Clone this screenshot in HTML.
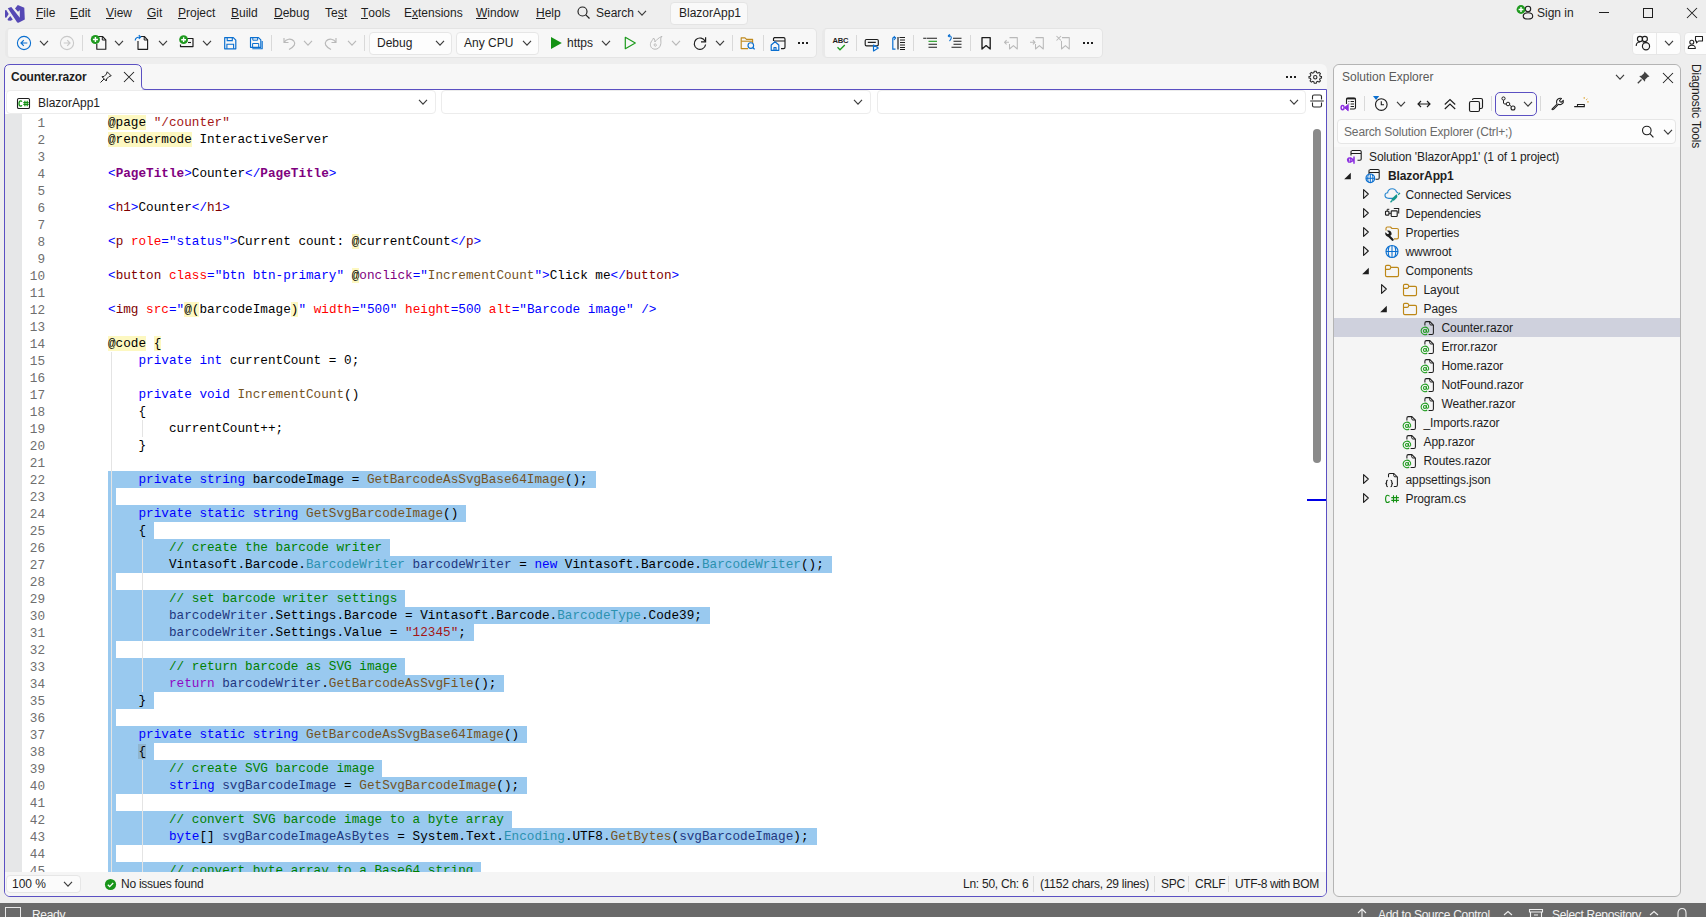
<!DOCTYPE html>
<html><head><meta charset="utf-8">
<style>
*{box-sizing:border-box;margin:0;padding:0}
html,body{width:1706px;height:917px;overflow:hidden;background:#eeeeee;font-family:"Liberation Sans",sans-serif;font-size:12px;color:#1e1e1e}
.abs{position:absolute}
.tx{position:absolute;white-space:nowrap;line-height:14px;font-size:12px}
.sb{letter-spacing:-0.25px}
svg{position:absolute;overflow:visible}
.menu{position:absolute;top:6px;font-size:12px;white-space:nowrap;line-height:14px}
.menu u{text-decoration:none;position:relative}
.menu u:after{content:"";position:absolute;left:0;right:0;bottom:1px;height:1px;background:#1e1e1e}
.tb{position:absolute;top:28px;height:30px;background:#f7f7f7;border:1px solid #e4e4e4;border-left:3px solid #e9e9e9;border-radius:5px}
.dd{position:absolute;top:32px;height:23px;background:#fdfdfd;border:1px solid #e6e6e6;border-radius:4px}
#editor{position:absolute;left:4px;top:89px;width:1323px;height:808px;border:1px solid #5b50c2;border-radius:0 0 6px 6px;background:#ffffff}
#tabstrip{position:absolute;left:5px;top:64px;width:1322px;height:25px;background:#f7f7f7;border-radius:6px 6px 0 0}
#tab{position:absolute;left:4px;top:64px;width:138px;height:26px;border:1px solid #5b50c2;border-bottom:none;border-radius:6px 6px 0 0;background:#f7f7f7}
.navbar{position:absolute;top:90px;height:24px;background:#ffffff;border:1px solid #ececec;border-radius:4px}
#gutter{position:absolute;left:5px;top:114px;width:17px;height:758px;background:#e6e7e8}
.ln{position:absolute;left:20px;width:25px;text-align:right;font-family:"Liberation Mono",monospace;font-size:12.7px;line-height:17px;height:17px;color:#6e6e6e;padding-top:1px}
.cl{position:absolute;left:108px;font-family:"Liberation Mono",monospace;font-size:12.7px;line-height:17px;height:17px;white-space:pre;color:#000}
.sel{position:absolute;left:108px;height:17px;background:#99c9ef}
.k{color:#0000ff}.c{color:#8f08c4}.s{color:#a31515}.m{color:#008000}.ty{color:#2b91af}.f{color:#74531f}.v{color:#1f377f}.p{color:#000}
.d{color:#0000ff}.e{color:#800000}.r{color:#ff0000}.g{color:#800080}.G{color:#800080;font-weight:bold}.y{background:#fdf8c1}.B{background:#8fb5cf}
.guide{position:absolute;width:1px;background:#e4e4e4}
#codeclip{position:absolute;left:5px;top:114px;width:1321px;height:758px;overflow:hidden}
#codeclip > div{position:absolute;left:-5px;top:-114px}
#edstatus{position:absolute;left:5px;top:872px;width:1321px;height:24px;background:#f5f5f5;border-radius:0 0 5px 5px}
#se{position:absolute;left:1333px;top:64px;width:348px;height:833px;background:#f5f5f5;border:1px solid #b4b4b4;border-radius:6px}
#sehead{position:absolute;left:1334px;top:65px;width:346px;height:82px;background:#f9f9f9;border-radius:6px 6px 0 0}
.se{position:absolute;font-size:12px;white-space:nowrap;line-height:14px;color:#1e1e1e}
#status{position:absolute;left:0;top:903px;width:1706px;height:14px;background:#6a6a6a}
.st{position:absolute;top:908px;font-size:12px;line-height:14px;color:#f3f3f3;white-space:nowrap;letter-spacing:-0.3px}
</style></head><body>

<!-- MENU BAR -->
<svg style="left:3px;top:3px" width="25" height="23" viewBox="0 0 25 23">
  <path d="M4.8 5.3 L8.3 4.1 L16.8 14.8 L16.8 7.3 L15 8.8 L12 5.4 L14.8 2.1 L21.3 4.8 L21.8 16.5 L15.5 19.8 L14.2 19.5 Z" fill="#5548b5"/>
  <path d="M2 7.2 L3.3 7 L5.7 11 L3.3 14.8 L2 14.5 Z M4.5 16.3 L7.3 13 L9.8 16.5 L7.8 17.8 L5 17.5 Z" fill="#5548b5"/>
</svg>
<div class="menu" style="left:36px"><u>F</u>ile</div>
<div class="menu" style="left:70px"><u>E</u>dit</div>
<div class="menu" style="left:106px"><u>V</u>iew</div>
<div class="menu" style="left:147px"><u>G</u>it</div>
<div class="menu" style="left:178px"><u>P</u>roject</div>
<div class="menu" style="left:231px"><u>B</u>uild</div>
<div class="menu" style="left:274px"><u>D</u>ebug</div>
<div class="menu" style="left:325px">Te<u>s</u>t</div>
<div class="menu" style="left:361px"><u>T</u>ools</div>
<div class="menu" style="left:404px">E<u>x</u>tensions</div>
<div class="menu" style="left:476px"><u>W</u>indow</div>
<div class="menu" style="left:536px"><u>H</u>elp</div>
<div class="menu" style="left:596px">Search</div>
<div class="abs" style="left:670px;top:1.5px;width:78px;height:23px;background:#f9f9f9;border:1px solid #e4e4e4;border-radius:4px"></div>
<div class="menu" style="left:679px">BlazorApp1</div>
<div class="menu" style="left:1537px">Sign in</div>

<!-- TOOLBAR -->
<div class="tb" style="left:5px;width:812px"></div>
<div class="tb" style="left:822px;width:281px"></div>
<div class="dd" style="left:1632px;width:49px"></div>
<div class="abs" style="left:1656px;top:33px;width:1px;height:21px;background:#e8e8e8"></div>
<div class="dd" style="left:1684px;width:30px"></div>
<div class="dd" style="left:369px;width:83px"></div>
<div class="dd" style="left:456px;width:83px"></div>
<div class="menu" style="left:377px;top:36px">Debug</div>
<div class="menu" style="left:464px;top:36px">Any CPU</div>
<div class="menu" style="left:567px;top:36px">https</div>
<svg style="left:16px;top:35px" width="16" height="16" viewBox="0 0 16 16" ><circle cx="8" cy="8" r="6.6" fill="none" stroke="#0a6fd0" stroke-width="1.1"/><path d="M11.3 8 H5.2 M7.8 5.2 L5 8 L7.8 10.8" fill="none" stroke="#0a6fd0" stroke-width="1.2"/></svg><svg style="left:38px;top:39px" width="12" height="8" viewBox="0 0 12 8" ><path d="M2 1.7999999999999998 L6 6.2 L10 1.7999999999999998" fill="none" stroke="#3c3c3c" stroke-width="1.15"/></svg><svg style="left:59px;top:35px" width="16" height="16" viewBox="0 0 16 16" ><circle cx="8" cy="8" r="6.6" fill="none" stroke="#c9c9c9" stroke-width="1.1"/><path d="M4.7 8 H10.8 M8.2 5.2 L11 8 L8.2 10.8" fill="none" stroke="#c9c9c9" stroke-width="1.2"/></svg><div class="abs" style="left:82px;top:35px;width:1px;height:16px;background:#d9d9d9"></div><svg style="left:90px;top:33px" width="18" height="18" viewBox="0 0 18 18" ><path d="M8 3.5 H12.5 L15.8 6.8 V16.2 H6.8 V11" fill="none" stroke="#1e1e1e" stroke-width="1.15" stroke-linejoin="round"/><path d="M12.3 3.5 V7 H15.8" fill="none" stroke="#1e1e1e" stroke-width="1"/><circle cx="5.4" cy="6.5" r="4.6" fill="#1f9a1f"/><path d="M5.4 4 V9 M2.9 6.5 H7.9" stroke="#fff" stroke-width="1.4"/></svg><svg style="left:113px;top:39px" width="12" height="8" viewBox="0 0 12 8" ><path d="M2 1.7999999999999998 L6 6.2 L10 1.7999999999999998" fill="none" stroke="#3c3c3c" stroke-width="1.15"/></svg><svg style="left:132px;top:33px" width="18" height="18" viewBox="0 0 18 18" ><path d="M6 8 V16.3 H15.6 V6.8 L12.3 3.5 H9" fill="none" stroke="#1e1e1e" stroke-width="1.15" stroke-linejoin="round"/><path d="M12.2 3.5 V7 H15.6" fill="none" stroke="#1e1e1e" stroke-width="1"/><path d="M3.2 7.6 C3.2 5 5 4 8.5 4 M6.8 2.2 L8.7 4 L6.8 5.8" fill="none" stroke="#0a6fd0" stroke-width="1.15"/></svg><svg style="left:157px;top:39px" width="12" height="8" viewBox="0 0 12 8" ><path d="M2 1.7999999999999998 L6 6.2 L10 1.7999999999999998" fill="none" stroke="#3c3c3c" stroke-width="1.15"/></svg><svg style="left:177px;top:33px" width="18" height="18" viewBox="0 0 18 18" ><path d="M10 5.5 H16 V13.6 H3.5 V11.5" fill="none" stroke="#1e1e1e" stroke-width="1.2" stroke-linejoin="round"/><path d="M11 9.5 H14" stroke="#1e1e1e" stroke-width="1.1"/><circle cx="6.6" cy="6.7" r="4.4" fill="#1f9a1f"/><path d="M6.6 4.3 V9.1 M4.2 6.7 H9" stroke="#fff" stroke-width="1.4"/></svg><svg style="left:201px;top:39px" width="12" height="8" viewBox="0 0 12 8" ><path d="M2 1.7999999999999998 L6 6.2 L10 1.7999999999999998" fill="none" stroke="#3c3c3c" stroke-width="1.15"/></svg><svg style="left:222px;top:35px" width="16" height="16" viewBox="0 0 16 16" ><path d="M2.7 2.6 H11.3 L13.8 5.1 V13.8 H2.7 Z" fill="none" stroke="#0a6fd0" stroke-width="1.2" stroke-linejoin="round"/><path d="M5.2 2.6 V5.6 H10.3 V2.6 M4.9 13.8 V9.2 H11.6 V13.8" fill="none" stroke="#0a6fd0" stroke-width="1.1"/></svg><svg style="left:248px;top:35px" width="16" height="16" viewBox="0 0 16 16" ><path d="M2.5 2.6 H10.5 L12.8 4.9 V12.3 H2.5 Z" fill="none" stroke="#0a6fd0" stroke-width="1.15" stroke-linejoin="round"/><path d="M4.8 2.6 V5.2 H9.6 V2.6 M4.6 12.3 V8.5 H10.7 V12.3" fill="none" stroke="#0a6fd0" stroke-width="1"/><path d="M14.2 6 V13.8 H4.3" fill="none" stroke="#0a6fd0" stroke-width="1.1" stroke-linejoin="round"/></svg><div class="abs" style="left:271px;top:35px;width:1px;height:16px;background:#d9d9d9"></div><svg style="left:281px;top:35px" width="16" height="16" viewBox="0 0 16 16" ><path d="M3 3 V7.5 H7.5 M3.2 7.3 C5 4 10 3 12.8 6 C15 8.6 13.5 11.5 8 14.5" fill="none" stroke="#b9b9b9" stroke-width="1.15"/></svg><svg style="left:302px;top:39px" width="12" height="8" viewBox="0 0 12 8" ><path d="M2 1.7999999999999998 L6 6.2 L10 1.7999999999999998" fill="none" stroke="#b9b9b9" stroke-width="1.15"/></svg><svg style="left:323px;top:35px" width="16" height="16" viewBox="0 0 16 16" ><path d="M13 3 V7.5 H8.5 M12.8 7.3 C11 4 6 3 3.2 6 C1 8.6 2.5 11.5 8 14.5" fill="none" stroke="#b9b9b9" stroke-width="1.15"/></svg><svg style="left:346px;top:39px" width="12" height="8" viewBox="0 0 12 8" ><path d="M2 1.7999999999999998 L6 6.2 L10 1.7999999999999998" fill="none" stroke="#b9b9b9" stroke-width="1.15"/></svg><div class="abs" style="left:364px;top:35px;width:1px;height:16px;background:#d9d9d9"></div><svg style="left:434px;top:39px" width="12" height="8" viewBox="0 0 12 8" ><path d="M2 1.7999999999999998 L6 6.2 L10 1.7999999999999998" fill="none" stroke="#3c3c3c" stroke-width="1.15"/></svg><svg style="left:521px;top:39px" width="12" height="8" viewBox="0 0 12 8" ><path d="M2 1.7999999999999998 L6 6.2 L10 1.7999999999999998" fill="none" stroke="#3c3c3c" stroke-width="1.15"/></svg><svg style="left:549px;top:35px" width="14" height="16" viewBox="0 0 14 16" ><path d="M2 2 L12.8 8 L2 14 Z" fill="#149214"/></svg><svg style="left:600px;top:39px" width="12" height="8" viewBox="0 0 12 8" ><path d="M2 1.7999999999999998 L6 6.2 L10 1.7999999999999998" fill="none" stroke="#3c3c3c" stroke-width="1.15"/></svg><svg style="left:623px;top:35px" width="14" height="16" viewBox="0 0 14 16" ><path d="M2.3 2.3 L12.3 8 L2.3 13.7 Z" fill="none" stroke="#1d9b1d" stroke-width="1.2" stroke-linejoin="round"/></svg><svg style="left:648px;top:35px" width="16" height="16" viewBox="0 0 16 16" ><path d="M7 14.2 C3.5 14 2 11.5 2.5 8.5 C3 6 5 5 5.5 3 C7 4.5 7 6 6.8 7 C8 5.5 10 3 14 1.3 C11.5 3.5 13.8 6 12.5 10 C11.8 12.5 9.8 14.3 7 14.2 Z M6 10 C6 8.8 7.5 8.5 8.2 9.5 C9 11 7 12.2 6 10" fill="none" stroke="#b9b9b9" stroke-width="1"/></svg><svg style="left:670px;top:39px" width="12" height="8" viewBox="0 0 12 8" ><path d="M2 1.7999999999999998 L6 6.2 L10 1.7999999999999998" fill="none" stroke="#b9b9b9" stroke-width="1.15"/></svg><svg style="left:692px;top:35px" width="16" height="16" viewBox="0 0 16 16" ><path d="M13.2 6.5 A5.7 5.7 0 1 0 13.6 9.5" fill="none" stroke="#1e1e1e" stroke-width="1.2"/><path d="M13.6 2.2 V6.8 H9" fill="none" stroke="#1e1e1e" stroke-width="1.2"/></svg><svg style="left:714px;top:39px" width="12" height="8" viewBox="0 0 12 8" ><path d="M2 1.7999999999999998 L6 6.2 L10 1.7999999999999998" fill="none" stroke="#3c3c3c" stroke-width="1.15"/></svg><div class="abs" style="left:732px;top:35px;width:1px;height:16px;background:#d9d9d9"></div><svg style="left:739px;top:35px" width="16" height="16" viewBox="0 0 16 16" ><path d="M9 13.6 H2.2 V2.8 H6 L7.5 4.4 H13.6 V8" fill="none" stroke="#c08a1e" stroke-width="1.15" stroke-linejoin="round"/><path d="M2.2 6.2 H13.6" stroke="#c08a1e" stroke-width="1.1"/><circle cx="11.8" cy="10.5" r="2.8" fill="#f7f7f7" stroke="#0a6fd0" stroke-width="1.15"/><path d="M13.8 12.5 L15.6 14.4" stroke="#0a6fd0" stroke-width="1.3"/></svg><div class="abs" style="left:763px;top:35px;width:1px;height:16px;background:#d9d9d9"></div><svg style="left:769px;top:35px" width="18" height="16" viewBox="0 0 18 16" ><path d="M5 2.6 H14.6 C15.5 2.6 16 3.2 16 4 V12.2 C16 13.1 15.5 13.6 14.6 13.6 H12 M5 6 H16 M4.5 6 V4 C4.5 3.2 5 2.6 5.8 2.6" fill="none" stroke="#1e1e1e" stroke-width="1.15"/><path d="M2.2 15.3 V10 L6 6.8 L9.8 10 V15.3 Z M5 15.3 V12.5 H7 V15.3" fill="#f7f7f7" stroke="#0a6fd0" stroke-width="1.2" stroke-linejoin="round"/></svg><div class="abs" style="left:798px;top:42px;width:2px;height:2px;background:#1e1e1e"></div><div class="abs" style="left:802px;top:42px;width:2px;height:2px;background:#1e1e1e"></div><div class="abs" style="left:806px;top:42px;width:2px;height:2px;background:#1e1e1e"></div><svg style="left:831px;top:34px" width="20" height="18" viewBox="0 0 20 18" ><text x="1.5" y="8.6" font-family="Liberation Sans" font-weight="bold" font-size="7.6" fill="#1e1e1e" letter-spacing="-0.2">ABC</text><path d="M6.5 13.3 L9 15.8 L13.8 11" fill="none" stroke="#1d9b1d" stroke-width="1.3"/></svg><div class="abs" style="left:856px;top:35px;width:1px;height:16px;background:#d9d9d9"></div><svg style="left:863px;top:35px" width="18" height="18" viewBox="0 0 18 18" ><path d="M3.5 4.5 H14 C14.8 4.5 15.3 5 15.3 5.8 V9.5 C15.3 10.3 14.8 10.8 14 10.8 H3.5 C2.7 10.8 2.2 10.3 2.2 9.5 V5.8 C2.2 5 2.7 4.5 3.5 4.5 Z M4.8 7.3 H12.8" fill="none" stroke="#1e1e1e" stroke-width="1.15"/><path d="M10.5 10 V16 L15.3 13 Z" fill="#f7f7f7" stroke="#0a6fd0" stroke-width="1.15" stroke-linejoin="round"/></svg><svg style="left:888px;top:35px" width="18" height="16" viewBox="0 0 18 16" ><path d="M5 2.6 H7.5 M4.8 2.6 V14.2 H7.5" fill="none" stroke="#0a6fd0" stroke-width="1.2"/><path d="M6 5 L7.6 3 L5.8 1" fill="none" stroke="#0a6fd0" stroke-width="1.1"/><path d="M10 2 V14.5" stroke="#1e1e1e" stroke-width="1.2"/><path d="M11.5 2.5 H17 M12 5 H17 M12 7.5 H17 M12 10 H17 M12 12.5 H17 M12 14.5 H17" stroke="#1e1e1e" stroke-width="1"/></svg><div class="abs" style="left:913px;top:35px;width:1px;height:16px;background:#d9d9d9"></div><svg style="left:921px;top:35px" width="18" height="16" viewBox="0 0 18 16" ><path d="M2.2 3.3 H5 M5.5 3.3 H16 M7.5 12.3 H16 M7.5 9.3 H16" stroke="#1e1e1e" stroke-width="1.1"/><path d="M7.5 6.3 H16" stroke="#1d9b1d" stroke-width="1.1"/></svg><svg style="left:945px;top:33px" width="18" height="18" viewBox="0 0 18 18" ><path d="M8 5.3 H16.5 M8.5 8.3 H16.5 M8.5 11.3 H16.5 M6.5 14.3 H16.5" stroke="#1e1e1e" stroke-width="1.1"/><path d="M3 2.8 L5 1.5 M3 2.8 L4.6 4.2 M3.2 2.8 C7 2.2 7.2 5.5 4.5 8" fill="none" stroke="#0a6fd0" stroke-width="1.1"/></svg><div class="abs" style="left:970px;top:35px;width:1px;height:16px;background:#d9d9d9"></div><svg style="left:978px;top:35px" width="16" height="16" viewBox="0 0 16 16" ><path d="M4 2.6 H12.2 V14 L8.1 10.6 L4 14 Z" fill="none" stroke="#1e1e1e" stroke-width="1.35" stroke-linejoin="round"/></svg><svg style="left:1003px;top:35px" width="16" height="16" viewBox="0 0 16 16" ><path d="M6.5 2.6 H14.3 V14 L10.4 10.6 L6.5 14 V9 M6 7.3 H1.5 M3.6 5.2 L1.5 7.3 L3.6 9.4" fill="none" stroke="#b9b9b9" stroke-width="1.05" stroke-linejoin="round"/></svg><svg style="left:1029px;top:35px" width="16" height="16" viewBox="0 0 16 16" ><path d="M6.5 2.6 H14.3 V14 L10.4 10.6 L6.5 14 V9 M1 7.3 H6 M3.9 5.2 L6 7.3 L3.9 9.4" fill="none" stroke="#b9b9b9" stroke-width="1.05" stroke-linejoin="round"/></svg><svg style="left:1055px;top:35px" width="16" height="16" viewBox="0 0 16 16" ><path d="M7 2.6 H14.3 V14 L10.4 10.6 L6.5 14 V6 M1.5 1 L6 5.5 M6 1 L1.5 5.5" fill="none" stroke="#b9b9b9" stroke-width="1.05" stroke-linejoin="round"/></svg><div class="abs" style="left:1083px;top:42px;width:2px;height:2px;background:#1e1e1e"></div><div class="abs" style="left:1087px;top:42px;width:2px;height:2px;background:#1e1e1e"></div><div class="abs" style="left:1091px;top:42px;width:2px;height:2px;background:#1e1e1e"></div><svg style="left:1634px;top:34px" width="20" height="18" viewBox="0 0 20 18" ><circle cx="6" cy="5" r="2.6" fill="none" stroke="#1e1e1e" stroke-width="1.1"/><circle cx="10.8" cy="5" r="2.6" fill="none" stroke="#1e1e1e" stroke-width="1.1"/><path d="M2.2 12 C2.2 9 3.5 8 6 8 M8.5 8 C11 8 12.5 8 13 9" fill="none" stroke="#1e1e1e" stroke-width="1.1"/><circle cx="12" cy="12.2" r="3.6" fill="#f7f7f7" stroke="#1e1e1e" stroke-width="1.15"/></svg><svg style="left:1663px;top:39px" width="12" height="8" viewBox="0 0 12 8" ><path d="M2 1.7999999999999998 L6 6.2 L10 1.7999999999999998" fill="none" stroke="#3c3c3c" stroke-width="1.15"/></svg><svg style="left:1687px;top:34px" width="18" height="18" viewBox="0 0 18 18" ><circle cx="4.8" cy="8.3" r="2" fill="none" stroke="#1e1e1e" stroke-width="1.05"/><path d="M1.3 14.5 C1.3 12 2.5 11.3 4.8 11.3 C7 11.3 8.3 12 8.3 14.5 Z" fill="none" stroke="#1e1e1e" stroke-width="1.05"/><path d="M8.5 2.5 H15.5 V7 H11.5 L9.5 9 V7 H8.5 Z" fill="none" stroke="#1e1e1e" stroke-width="1.05" stroke-linejoin="round"/></svg><svg style="left:1515px;top:3px" width="20" height="18" viewBox="0 0 20 18" ><circle cx="13" cy="6" r="2.7" fill="none" stroke="#1e1e1e" stroke-width="1.1"/><path d="M8.2 13.2 C8.2 10.3 10 9.8 13 9.8 C16 9.8 17.7 10.3 17.7 13.2 C17.7 15.5 16 16 13 16 C10 16 8.2 15.5 8.2 13.2 Z" fill="none" stroke="#1e1e1e" stroke-width="1.1"/><circle cx="6" cy="6.5" r="4.4" fill="#1f9a1f"/><path d="M6 4.1 V8.9 M3.6 6.5 H8.4" stroke="#fff" stroke-width="1.4"/></svg><div class="abs" style="left:1599px;top:12px;width:10px;height:1px;background:#1e1e1e"></div><div class="abs" style="left:1643px;top:8px;width:10px;height:10px;border:1px solid #1e1e1e"></div><svg style="left:1686px;top:7px" width="12" height="12" viewBox="0 0 12 12" ><path d="M1 1 L11 11 M11 1 L1 11" stroke="#1e1e1e" stroke-width="1.05"/></svg><svg style="left:576px;top:5px" width="16" height="16" viewBox="0 0 16 16" ><circle cx="6.5" cy="6.5" r="4.5" fill="none" stroke="#1e1e1e" stroke-width="1.15"/><path d="M9.8 9.8 L13.5 13.5" stroke="#1e1e1e" stroke-width="1.2"/></svg><svg style="left:636px;top:9px" width="12" height="8" viewBox="0 0 12 8" ><path d="M2 1.7999999999999998 L6 6.2 L10 1.7999999999999998" fill="none" stroke="#3c3c3c" stroke-width="1.15"/></svg>

<!-- TAB STRIP & EDITOR -->
<div id="tabstrip"></div>
<div id="editor"></div>
<svg style="left:0;top:60px" width="160" height="32"><path d="M4.5 32 V10 Q4.5 4.5 10 4.5 H136 Q141.5 4.5 141.5 10 V25 Q141.5 29.5 146 29.5 H160" fill="#f7f7f7" stroke="#5b50c2" stroke-width="1"/><rect x="5" y="29" width="137" height="3" fill="#f7f7f7"/></svg>
<div class="tx" style="left:11px;top:70px;font-weight:bold;letter-spacing:-0.2px">Counter.razor</div>

<div class="navbar" style="left:6px;width:430px"></div>
<div class="navbar" style="left:441px;width:430px"></div>
<div class="navbar" style="left:877px;width:429px"></div>
<div class="tx" style="left:38px;top:96px">BlazorApp1</div>

<div id="gutter"></div>
<div class="ln" style="top:114px">1</div><div class="ln" style="top:131px">2</div><div class="ln" style="top:148px">3</div><div class="ln" style="top:165px">4</div><div class="ln" style="top:182px">5</div><div class="ln" style="top:199px">6</div><div class="ln" style="top:216px">7</div><div class="ln" style="top:233px">8</div><div class="ln" style="top:250px">9</div><div class="ln" style="top:267px">10</div><div class="ln" style="top:284px">11</div><div class="ln" style="top:301px">12</div><div class="ln" style="top:318px">13</div><div class="ln" style="top:335px">14</div><div class="ln" style="top:352px">15</div><div class="ln" style="top:369px">16</div><div class="ln" style="top:386px">17</div><div class="ln" style="top:403px">18</div><div class="ln" style="top:420px">19</div><div class="ln" style="top:437px">20</div><div class="ln" style="top:454px">21</div><div class="ln" style="top:471px">22</div><div class="ln" style="top:488px">23</div><div class="ln" style="top:505px">24</div><div class="ln" style="top:522px">25</div><div class="ln" style="top:539px">26</div><div class="ln" style="top:556px">27</div><div class="ln" style="top:573px">28</div><div class="ln" style="top:590px">29</div><div class="ln" style="top:607px">30</div><div class="ln" style="top:624px">31</div><div class="ln" style="top:641px">32</div><div class="ln" style="top:658px">33</div><div class="ln" style="top:675px">34</div><div class="ln" style="top:692px">35</div><div class="ln" style="top:709px">36</div><div class="ln" style="top:726px">37</div><div class="ln" style="top:743px">38</div><div class="ln" style="top:760px">39</div><div class="ln" style="top:777px">40</div><div class="ln" style="top:794px">41</div><div class="ln" style="top:811px">42</div><div class="ln" style="top:828px">43</div><div class="ln" style="top:845px">44</div><div class="ln" style="top:862px">45</div>
<div id="codeclip"><div>
<div class="sel" style="top:471px;width:487.7px"></div><div class="sel" style="top:488px;width:7.6px"></div><div class="sel" style="top:505px;width:358.1px"></div><div class="sel" style="top:522px;width:45.7px"></div><div class="sel" style="top:539px;width:281.9px"></div><div class="sel" style="top:556px;width:723.9px"></div><div class="sel" style="top:573px;width:7.6px"></div><div class="sel" style="top:590px;width:297.2px"></div><div class="sel" style="top:607px;width:602.0px"></div><div class="sel" style="top:624px;width:365.8px"></div><div class="sel" style="top:641px;width:7.6px"></div><div class="sel" style="top:658px;width:297.2px"></div><div class="sel" style="top:675px;width:396.2px"></div><div class="sel" style="top:692px;width:45.7px"></div><div class="sel" style="top:709px;width:7.6px"></div><div class="sel" style="top:726px;width:419.1px"></div><div class="sel" style="top:743px;width:45.7px"></div><div class="sel" style="top:760px;width:274.3px"></div><div class="sel" style="top:777px;width:419.1px"></div><div class="sel" style="top:794px;width:7.6px"></div><div class="sel" style="top:811px;width:403.9px"></div><div class="sel" style="top:828px;width:708.7px"></div><div class="sel" style="top:845px;width:7.6px"></div><div class="sel" style="top:862px;width:373.4px"></div>
<div class="guide" style="left:111px;top:352px;height:527px"></div><div class="guide" style="left:142px;top:420px;height:17px"></div><div class="guide" style="left:142px;top:539px;height:153px"></div><div class="guide" style="left:142px;top:760px;height:119px"></div>
<div class="cl" style="top:114px"><span class="y">@page</span><span class="p"> </span><span class="s">&quot;/counter&quot;</span></div><div class="cl" style="top:131px"><span class="y">@rendermode</span><span class="p"> InteractiveServer</span></div><div class="cl" style="top:148px"></div><div class="cl" style="top:165px"><span class="d">&lt;</span><span class="G">PageTitle</span><span class="d">&gt;</span><span class="p">Counter</span><span class="d">&lt;/</span><span class="G">PageTitle</span><span class="d">&gt;</span></div><div class="cl" style="top:182px"></div><div class="cl" style="top:199px"><span class="d">&lt;</span><span class="e">h1</span><span class="d">&gt;</span><span class="p">Counter</span><span class="d">&lt;/</span><span class="e">h1</span><span class="d">&gt;</span></div><div class="cl" style="top:216px"></div><div class="cl" style="top:233px"><span class="d">&lt;</span><span class="e">p</span><span class="p"> </span><span class="r">role</span><span class="d">=&quot;status&quot;&gt;</span><span class="p">Current count: </span><span class="y">@</span><span class="p">currentCount</span><span class="d">&lt;/</span><span class="e">p</span><span class="d">&gt;</span></div><div class="cl" style="top:250px"></div><div class="cl" style="top:267px"><span class="d">&lt;</span><span class="e">button</span><span class="p"> </span><span class="r">class</span><span class="d">=&quot;btn btn-primary&quot;</span><span class="p"> </span><span class="y">@</span><span class="g">onclick</span><span class="d">=&quot;</span><span class="f">IncrementCount</span><span class="d">&quot;&gt;</span><span class="p">Click me</span><span class="d">&lt;/</span><span class="e">button</span><span class="d">&gt;</span></div><div class="cl" style="top:284px"></div><div class="cl" style="top:301px"><span class="d">&lt;</span><span class="e">img</span><span class="p"> </span><span class="r">src</span><span class="d">=&quot;</span><span class="y">@(</span><span class="p">barcodeImage</span><span class="y">)</span><span class="d">&quot;</span><span class="p"> </span><span class="r">width</span><span class="d">=&quot;500&quot;</span><span class="p"> </span><span class="r">height</span><span class="d">=500</span><span class="p"> </span><span class="r">alt</span><span class="d">=&quot;Barcode image&quot;</span><span class="p"> </span><span class="d">/&gt;</span></div><div class="cl" style="top:318px"></div><div class="cl" style="top:335px"><span class="y">@code</span><span class="p"> </span><span class="y">{</span></div><div class="cl" style="top:352px"><span class="p">    </span><span class="k">private</span><span class="p"> </span><span class="k">int</span><span class="p"> currentCount = 0;</span></div><div class="cl" style="top:369px"></div><div class="cl" style="top:386px"><span class="p">    </span><span class="k">private</span><span class="p"> </span><span class="k">void</span><span class="p"> </span><span class="f">IncrementCount</span><span class="p">()</span></div><div class="cl" style="top:403px"><span class="p">    {</span></div><div class="cl" style="top:420px"><span class="p">        currentCount++;</span></div><div class="cl" style="top:437px"><span class="p">    }</span></div><div class="cl" style="top:454px"></div><div class="cl" style="top:471px"><span class="p">    </span><span class="k">private</span><span class="p"> </span><span class="k">string</span><span class="p"> barcodeImage = </span><span class="f">GetBarcodeAsSvgBase64Image</span><span class="p">();</span></div><div class="cl" style="top:488px"></div><div class="cl" style="top:505px"><span class="p">    </span><span class="k">private</span><span class="p"> </span><span class="k">static</span><span class="p"> </span><span class="k">string</span><span class="p"> </span><span class="f">GetSvgBarcodeImage</span><span class="p">()</span></div><div class="cl" style="top:522px"><span class="p">    {</span></div><div class="cl" style="top:539px"><span class="p">        </span><span class="m">// create the barcode writer</span></div><div class="cl" style="top:556px"><span class="p">        Vintasoft.Barcode.</span><span class="ty">BarcodeWriter</span><span class="p"> </span><span class="v">barcodeWriter</span><span class="p"> = </span><span class="k">new</span><span class="p"> Vintasoft.Barcode.</span><span class="ty">BarcodeWriter</span><span class="p">();</span></div><div class="cl" style="top:573px"></div><div class="cl" style="top:590px"><span class="p">        </span><span class="m">// set barcode writer settings</span></div><div class="cl" style="top:607px"><span class="p">        </span><span class="v">barcodeWriter</span><span class="p">.Settings.Barcode = Vintasoft.Barcode.</span><span class="ty">BarcodeType</span><span class="p">.Code39;</span></div><div class="cl" style="top:624px"><span class="p">        </span><span class="v">barcodeWriter</span><span class="p">.Settings.Value = </span><span class="s">&quot;12345&quot;</span><span class="p">;</span></div><div class="cl" style="top:641px"></div><div class="cl" style="top:658px"><span class="p">        </span><span class="m">// return barcode as SVG image</span></div><div class="cl" style="top:675px"><span class="p">        </span><span class="c">return</span><span class="p"> </span><span class="v">barcodeWriter</span><span class="p">.</span><span class="f">GetBarcodeAsSvgFile</span><span class="p">();</span></div><div class="cl" style="top:692px"><span class="p">    }</span></div><div class="cl" style="top:709px"></div><div class="cl" style="top:726px"><span class="p">    </span><span class="k">private</span><span class="p"> </span><span class="k">static</span><span class="p"> </span><span class="k">string</span><span class="p"> </span><span class="f">GetBarcodeAsSvgBase64Image</span><span class="p">()</span></div><div class="cl" style="top:743px"><span class="p">    </span><span class="B">{</span></div><div class="cl" style="top:760px"><span class="p">        </span><span class="m">// create SVG barcode image</span></div><div class="cl" style="top:777px"><span class="p">        </span><span class="k">string</span><span class="p"> </span><span class="v">svgBarcodeImage</span><span class="p"> = </span><span class="f">GetSvgBarcodeImage</span><span class="p">();</span></div><div class="cl" style="top:794px"></div><div class="cl" style="top:811px"><span class="p">        </span><span class="m">// convert SVG barcode image to a byte array</span></div><div class="cl" style="top:828px"><span class="p">        </span><span class="k">byte</span><span class="p">[] </span><span class="v">svgBarcodeImageAsBytes</span><span class="p"> = System.Text.</span><span class="ty">Encoding</span><span class="p">.UTF8.</span><span class="f">GetBytes</span><span class="p">(</span><span class="v">svgBarcodeImage</span><span class="p">);</span></div><div class="cl" style="top:845px"></div><div class="cl" style="top:862px"><span class="p">        </span><span class="m">// convert byte array to a Base64 string</span></div>
</div></div>

<div id="edstatus"></div>
<div class="tx sb" style="left:121px;top:877px">No issues found</div>
<div class="tx sb" style="left:963px;top:877px">Ln: 50, Ch: 6</div>
<div class="tx sb" style="left:1040px;top:877px">(1152 chars, 29 lines)</div>
<div class="tx sb" style="left:1161px;top:877px">SPC</div>
<div class="tx sb" style="left:1195px;top:877px">CRLF</div>
<div class="tx sb" style="left:1235px;top:877px;letter-spacing:-0.4px">UTF-8 with BOM</div>
<svg style="left:99px;top:70px" width="14" height="14" viewBox="0 0 14 14" ><path d="M8.2 1.8 L12.2 5.8 L10 6.5 L7.5 9 L7.3 11 L3 6.7 L5 6.5 L7.5 4 Z M5 9 L1.5 12.5" fill="none" stroke="#1e1e1e" stroke-width="1" stroke-linejoin="round"/></svg><svg style="left:122px;top:70px" width="14" height="14" viewBox="0 0 14 14" ><path d="M2 2 L12 12 M12 2 L2 12" stroke="#1e1e1e" stroke-width="1.05"/></svg><div class="abs" style="left:1286px;top:76px;width:2px;height:2px;background:#1e1e1e"></div><div class="abs" style="left:1290px;top:76px;width:2px;height:2px;background:#1e1e1e"></div><div class="abs" style="left:1294px;top:76px;width:2px;height:2px;background:#1e1e1e"></div><svg style="left:1309px;top:70.5px" width="12.5" height="12.5" viewBox="1 1.2 14 14"><g fill="none" stroke="#2a2a2a" stroke-width="1.2"><circle cx="8" cy="8.2" r="1.9"/><path d="M6.9 2.2 H9.1 L9.5 3.8 L10.9 4.4 L12.3 3.5 L13.8 5 L12.9 6.4 L13.5 7.8 L15 8.2 V9.8 L13.5 10.2 L12.9 11.6 L13.8 13 L12.3 14.5 L10.9 13.6 L9.5 14.2 L9.1 15.8 H6.9 L6.5 14.2 L5.1 13.6 L3.7 14.5 L2.2 13 L3.1 11.6 L2.5 10.2 L1 9.8 V8.2 L2.5 7.8 L3.1 6.4 L2.2 5 L3.7 3.5 L5.1 4.4 L6.5 3.8 Z" transform="translate(0,-0.8)"/></g></svg><svg style="left:16px;top:97px" width="15" height="13" viewBox="0 0 15 13" ><rect x="1.5" y="1.5" width="12" height="10" rx="1.3" fill="#fff" stroke="#1e1e1e" stroke-width="1.1"/><path d="M6 4.6 C5.6 4.1 5.2 3.9 4.7 3.9 C3.6 3.9 3 4.9 3 6.5 C3 8.1 3.6 9.1 4.7 9.1 C5.2 9.1 5.6 8.9 6 8.4" fill="none" stroke="#139113" stroke-width="1.3"/><path d="M8.9 3.8 V9.2 M11.2 3.8 V9.2 M7.3 5.6 H12.7 M7.3 7.5 H12.7" stroke="#139113" stroke-width="1.2"/></svg><svg style="left:417px;top:98px" width="12" height="8" viewBox="0 0 12 8" ><path d="M2 1.7999999999999998 L6 6.2 L10 1.7999999999999998" fill="none" stroke="#3c3c3c" stroke-width="1.15"/></svg><svg style="left:852px;top:98px" width="12" height="8" viewBox="0 0 12 8" ><path d="M2 1.7999999999999998 L6 6.2 L10 1.7999999999999998" fill="none" stroke="#3c3c3c" stroke-width="1.15"/></svg><svg style="left:1288px;top:98px" width="12" height="8" viewBox="0 0 12 8" ><path d="M2 1.7999999999999998 L6 6.2 L10 1.7999999999999998" fill="none" stroke="#3c3c3c" stroke-width="1.15"/></svg><svg style="left:1309px;top:93px" width="16" height="16" viewBox="0 0 16 16" ><path d="M3.5 6.5 V3.5 C3.5 2.6 4 2 5 2 H11 C12 2 12.5 2.6 12.5 3.5 V6.5 M3.5 9.5 V12.5 C3.5 13.4 4 14 5 14 H11 C12 14 12.5 13.4 12.5 12.5 V9.5 M1.2 8 H14.8" fill="none" stroke="#2a2a2a" stroke-width="1.1"/></svg><div class="abs" style="left:1313px;top:129px;width:8px;height:334px;background:#8a8a8a;border-radius:4px"></div><div class="abs" style="left:1307px;top:499px;width:19px;height:2px;background:#0000e6"></div><div class="abs" style="left:6px;top:875px;width:75px;height:18px;background:#fbfbfb;border:1px solid #e6e6e6;border-radius:4px"></div><svg style="left:62px;top:880px" width="12" height="8" viewBox="0 0 12 8" ><path d="M2 1.7999999999999998 L6 6.2 L10 1.7999999999999998" fill="none" stroke="#3c3c3c" stroke-width="1.15"/></svg><svg style="left:104px;top:878px" width="13" height="13" viewBox="0 0 13 13" ><circle cx="6.5" cy="6.5" r="5.6" fill="#18951a"/><path d="M3.8 6.7 L5.7 8.6 L9.2 5" fill="none" stroke="#fff" stroke-width="1.3"/></svg><div class="abs" style="left:1033px;top:876px;width:1px;height:16px;background:#dcdcdc"></div><div class="abs" style="left:1154px;top:876px;width:1px;height:16px;background:#dcdcdc"></div><div class="abs" style="left:1188px;top:876px;width:1px;height:16px;background:#dcdcdc"></div><div class="abs" style="left:1228px;top:876px;width:1px;height:16px;background:#dcdcdc"></div>
<div class="tx" style="left:12px;top:877px">100 %</div>

<!-- SOLUTION EXPLORER -->
<div id="se"></div>
<div id="sehead"></div>
<div class="se" style="left:1342px;top:70px;color:#5a5a5a">Solution Explorer</div>
<svg style="left:1614px;top:73px" width="12" height="8" viewBox="0 0 12 8" ><path d="M2 1.7999999999999998 L6 6.2 L10 1.7999999999999998" fill="none" stroke="#3c3c3c" stroke-width="1.15"/></svg><svg style="left:1636px;top:70px" width="15" height="15" viewBox="0 0 15 15" ><path d="M8.5 1.5 L13.5 6.5 L11.8 7 L9.2 9.6 L9 11.8 L3.2 6 L5.4 5.8 L8 3.2 Z" fill="#424242"/><path d="M5.5 9.5 L1.8 13.2" stroke="#424242" stroke-width="1.3"/></svg><svg style="left:1661px;top:71px" width="14" height="14" viewBox="0 0 14 14" ><path d="M2 2 L12 12 M12 2 L2 12" stroke="#1e1e1e" stroke-width="1.05"/></svg><svg style="left:1338px;top:95px" width="20" height="18" viewBox="0 0 20 18" ><path d="M8.5 4.5 C8.5 3.6 9 3 10 3 H16 C17 3 17.5 3.6 17.5 4.5 V12.5 C17.5 13.4 17 14 16 14 H12 M8.5 4.5 V9" fill="none" stroke="#1e1e1e" stroke-width="1.1"/><path d="M8.5 3.6 H17.5" stroke="#1e1e1e" stroke-width="1.6"/><path d="M10.5 6.5 H11.3 M12.6 6.5 H16 M10.5 9 H11.3 M12.6 9 H16 M12.6 11.5 H16" stroke="#1e1e1e" stroke-width="1"/><ellipse cx="4.6" cy="12.6" rx="1.5" ry="2.2" fill="none" stroke="#8c2fe0" stroke-width="1.5"/><path d="M6.5 12.6 L10.2 9.6 V15.8 Z" fill="#8c2fe0" stroke="#8c2fe0" stroke-width="1" stroke-linejoin="round"/></svg><div class="abs" style="left:1364px;top:96px;width:1px;height:15px;background:#d9d9d9"></div><svg style="left:1372px;top:95px" width="18" height="18" viewBox="0 0 18 18" ><circle cx="9.3" cy="9.5" r="5.8" fill="none" stroke="#1e1e1e" stroke-width="1.15"/><path d="M9.3 6.2 V9.8 H12" fill="none" stroke="#1e1e1e" stroke-width="1.1"/><path d="M1 1 H7.2 L4.1 5 Z" fill="#0a6fd0"/></svg><svg style="left:1395px;top:100px" width="12" height="8" viewBox="0 0 12 8" ><path d="M2 1.7999999999999998 L6 6.2 L10 1.7999999999999998" fill="none" stroke="#3c3c3c" stroke-width="1.15"/></svg><svg style="left:1416px;top:96px" width="16" height="16" viewBox="0 0 16 16" ><path d="M2 8 H14 M5 5 L2 8 L5 11 M11 5 L14 8 L11 11" fill="none" stroke="#1e1e1e" stroke-width="1.15"/></svg><svg style="left:1442px;top:96px" width="16" height="16" viewBox="0 0 16 16" ><path d="M2.8 8.5 L8 3.5 L13.2 8.5 M2.8 13 L8 8 L13.2 13" fill="none" stroke="#1e1e1e" stroke-width="1.15"/></svg><svg style="left:1467px;top:96px" width="18" height="18" viewBox="0 0 18 18" ><path d="M5.5 4 C5.5 3 6 2.5 7 2.5 H14 C15 2.5 15.5 3 15.5 4 V11 C15.5 12 15 12.5 14 12.5 H12.5" fill="none" stroke="#1e1e1e" stroke-width="1.15"/><rect x="2.5" y="5.5" width="10" height="10" rx="1.5" fill="#f7f7f7" stroke="#1e1e1e" stroke-width="1.15"/></svg><div class="abs" style="left:1491px;top:96px;width:1px;height:15px;background:#d9d9d9"></div><div class="abs" style="left:1495px;top:92px;width:42px;height:24px;border:1.3px solid #5b50c2;border-radius:5px;background:#f9f9f9"></div><svg style="left:1500px;top:95px" width="18" height="18" viewBox="0 0 18 18" ><circle cx="3.5" cy="3.5" r="1.6" fill="none" stroke="#1e1e1e" stroke-width="1"/><circle cx="8" cy="9" r="1.8" fill="none" stroke="#1e1e1e" stroke-width="1"/><circle cx="13" cy="13" r="2" fill="none" stroke="#1e1e1e" stroke-width="1.1"/><path d="M3.5 5.2 V8 C3.5 8.8 4.5 9 6.2 9 M9.6 10 L11.4 11.6" fill="none" stroke="#1e1e1e" stroke-width="1"/></svg><svg style="left:1522px;top:100px" width="12" height="8" viewBox="0 0 12 8" ><path d="M2 1.7999999999999998 L6 6.2 L10 1.7999999999999998" fill="none" stroke="#3c3c3c" stroke-width="1.15"/></svg><div class="abs" style="left:1540px;top:96px;width:1px;height:15px;background:#d9d9d9"></div><svg style="left:1548px;top:96px" width="16" height="16" viewBox="0 0 16 16" ><path d="M4.2 12.8 L9 8 C8.2 6 8.8 3.5 11 2.5 C12 2.1 13 2.2 13.5 2.5 L11.5 4.6 L12.1 5.7 L13.4 6.2 L15.3 4.3 C15.6 5.5 15.2 7 14 7.8 C13 8.6 11.5 8.8 10.4 8.3 L5.5 13.4 C4.8 14 3.5 13.5 4.2 12.8 Z" fill="none" stroke="#1e1e1e" stroke-width="1.05" stroke-linejoin="round"/></svg><svg style="left:1573px;top:96px" width="18" height="16" viewBox="0 0 18 16" ><path d="M1.2 10.6 H4.5 M4.5 10.6 V8.5 H11.3 V10.6 H4.5" fill="none" stroke="#1e1e1e" stroke-width="1.1"/><path d="M11.2 1.2 V2.7 M13.3 3.8 L14.3 2.9 M14.2 5.9 H15.7" stroke="#d8940a" stroke-width="1"/></svg><div class="abs" style="left:1337px;top:119px;width:339px;height:25px;background:#fdfdfd;border:1px solid #e6e6e6;border-radius:4px"></div><svg style="left:1640px;top:124px" width="16" height="16" viewBox="0 0 16 16" ><circle cx="6.8" cy="6.5" r="4.3" fill="none" stroke="#1e1e1e" stroke-width="1.1"/><path d="M9.9 9.6 L13.4 13.3" stroke="#1e1e1e" stroke-width="1.15"/></svg><svg style="left:1662px;top:128px" width="12" height="8" viewBox="0 0 12 8" ><path d="M2 1.7999999999999998 L6 6.2 L10 1.7999999999999998" fill="none" stroke="#3c3c3c" stroke-width="1.15"/></svg>
<div class="se" style="left:1344px;top:125px;color:#6a6a6a;letter-spacing:-0.15px">Search Solution Explorer (Ctrl+;)</div>
<div class="abs" style="left:1334px;top:318px;width:346px;height:19px;background:#cfd1dd"></div><svg style="left:1347px;top:148px" width="17" height="17" viewBox="0 0 17 17" ><path d="M5 2.5 H13 C13.8 2.5 14.2 3 14.2 3.8 V11 C14.2 11.8 13.8 12.2 13 12.2 H10.5 M4 5.5 H14.2 M4 7.5 V3.8 C4 3 4.4 2.5 5.2 2.5" fill="none" stroke="#1e1e1e" stroke-width="1.1"/><path d="M2.2 10.5 L0.8 11.8 L2.2 13.2 M3.2 9.6 L7 12.3 V8.5 M3.2 14.2 L7 12 V15.8" fill="none" stroke="#8c2fe0" stroke-width="1.5"/><ellipse cx="2.3" cy="12" rx="1.6" ry="2.2" fill="none" stroke="#8c2fe0" stroke-width="1.3"/></svg><div class="se" style="left:1369px;top:150px;letter-spacing:-0.1px;">Solution &#x27;BlazorApp1&#x27; (1 of 1 project)</div><svg style="left:1343px;top:170.5px" width="9" height="10" viewBox="0 0 9 10" ><path d="M7.8 1.8 V8.2 H1.2 Z" fill="#1e1e1e"/></svg><svg style="left:1365px;top:167px" width="17" height="17" viewBox="0 0 17 17" ><path d="M5 2.5 H13 C13.8 2.5 14.2 3 14.2 3.8 V11 C14.2 11.8 13.8 12.2 13 12.2 H10.5 M4 5.5 H14.2 M4 7.5 V3.8 C4 3 4.4 2.5 5.2 2.5" fill="none" stroke="#1e1e1e" stroke-width="1.1"/><circle cx="5.3" cy="11.3" r="4.3" fill="#f5f5f5" stroke="#0a6fd0" stroke-width="1.2"/><path d="M1 11.3 H9.6 M5.3 7 V15.6 M3.4 7.5 C2.5 10 2.5 12.6 3.4 15.1 M7.2 7.5 C8.1 10 8.1 12.6 7.2 15.1" fill="none" stroke="#0a6fd0" stroke-width="1"/></svg><div class="se" style="left:1388px;top:169px;letter-spacing:-0.1px;font-weight:bold;">BlazorApp1</div><svg style="left:1362px;top:188px" width="9" height="12" viewBox="0 0 9 12" ><path d="M1.6 1.6 L6.3 6 L1.6 10.4 Z" fill="none" stroke="#1e1e1e" stroke-width="1.1" stroke-linejoin="round"/></svg><svg style="left:1384px;top:186px" width="17" height="17" viewBox="0 0 17 17" ><path d="M9.3 12.3 H4.8 C2.6 12.3 1 11.2 1 9.3 C1 7.7 2.2 6.7 3.6 6.8 C3.9 4.3 5.8 2.7 8.2 2.7 C10.4 2.7 12 4.1 12.5 6 C13.3 6.2 13.8 6.6 14.1 7.3" fill="none" stroke="#2a88d0" stroke-width="1.15"/><path d="M6.5 16.3 L8.3 14.5 M14.2 8.7 L16 6.9" stroke="#12968c" stroke-width="1.3"/><path d="M8.2 12.3 L12.5 8.2 C13.5 9.2 13.7 10.8 12.7 11.9 L10.4 14.2 C9.5 15 8 14.8 7.3 14.3 Z" fill="#12968c"/></svg><div class="se" style="left:1405.5px;top:188px;letter-spacing:-0.1px;">Connected Services</div><svg style="left:1362px;top:207px" width="9" height="12" viewBox="0 0 9 12" ><path d="M1.6 1.6 L6.3 6 L1.6 10.4 Z" fill="none" stroke="#1e1e1e" stroke-width="1.1" stroke-linejoin="round"/></svg><svg style="left:1384px;top:205px" width="17" height="17" viewBox="0 0 17 17" ><rect x="1.5" y="6.3" width="3.4" height="3.8" rx="0.5" fill="none" stroke="#1e1e1e" stroke-width="1.1"/><path d="M3.2 6.3 V4.3 H5.3" fill="none" stroke="#1e1e1e" stroke-width="1"/><path d="M4.9 8.3 H7" stroke="#1e1e1e" stroke-width="1"/><rect x="7.2" y="5.8" width="6" height="5.7" rx="0.8" fill="none" stroke="#1e1e1e" stroke-width="1.15"/><path d="M9.8 3.4 H14.7 V8.6" fill="none" stroke="#1e1e1e" stroke-width="1.05"/></svg><div class="se" style="left:1405.5px;top:207px;letter-spacing:-0.1px;">Dependencies</div><svg style="left:1362px;top:226px" width="9" height="12" viewBox="0 0 9 12" ><path d="M1.6 1.6 L6.3 6 L1.6 10.4 Z" fill="none" stroke="#1e1e1e" stroke-width="1.1" stroke-linejoin="round"/></svg><svg style="left:1384px;top:224px" width="17" height="17" viewBox="0 0 17 17" ><path d="M2 6.5 V4.5 C2 3.6 2.5 3 3.4 3 H6.5 L8 4.5 H13 C13.8 4.5 14.4 5 14.4 5.8 V13.5 C14.4 14.3 13.9 14.8 13 14.8 H10" fill="none" stroke="#c08a1e" stroke-width="1.15" stroke-linejoin="round"/><path d="M8.6 15.8 L4.6 11.8" stroke="#1e1e1e" stroke-width="2.3" stroke-linecap="round"/><path d="M5.6 12.6 C3.6 13.4 1.2 12 1.2 9.6 C1.2 9 1.3 8.6 1.5 8.2 L3.3 10 L4.7 9.9 L4.8 8.5 L3 6.7 C3.4 6.5 3.8 6.4 4.4 6.4 C6.8 6.4 8.2 8.8 7.4 10.8 Z" fill="#1e1e1e"/></svg><div class="se" style="left:1405.5px;top:226px;letter-spacing:-0.1px;">Properties</div><svg style="left:1362px;top:245px" width="9" height="12" viewBox="0 0 9 12" ><path d="M1.6 1.6 L6.3 6 L1.6 10.4 Z" fill="none" stroke="#1e1e1e" stroke-width="1.1" stroke-linejoin="round"/></svg><svg style="left:1384px;top:243px" width="17" height="17" viewBox="0 0 17 17" ><circle cx="8" cy="8.5" r="6" fill="none" stroke="#0a6fd0" stroke-width="1.15"/><path d="M2 8.5 H14 M8 2.5 V14.5 M5.2 3.2 C3.9 6.8 3.9 10.2 5.2 13.8 M10.8 3.2 C12.1 6.8 12.1 10.2 10.8 13.8" fill="none" stroke="#0a6fd0" stroke-width="1.05"/></svg><div class="se" style="left:1405.5px;top:245px;letter-spacing:-0.1px;">wwwroot</div><svg style="left:1361px;top:265.5px" width="9" height="10" viewBox="0 0 9 10" ><path d="M7.8 1.8 V8.2 H1.2 Z" fill="#1e1e1e"/></svg><svg style="left:1384px;top:262px" width="17" height="17" viewBox="0 0 17 17" ><path d="M1.5 13.3 V4.6 C1.5 3.9 2 3.4 2.7 3.4 H5.2 C6 3.4 6.4 3.8 6.6 4.6 L6.8 5.4 H13.2 C14 5.4 14.5 5.9 14.5 6.7 V13.3 C14.5 14.1 14 14.6 13.2 14.6 H2.8 C2 14.6 1.5 14.1 1.5 13.3 Z M1.5 7.3 H5.2 C6.2 7.3 6.7 6.6 6.8 5.4" fill="none" stroke="#bd8716" stroke-width="1.15" stroke-linejoin="round"/></svg><div class="se" style="left:1405.5px;top:264px;letter-spacing:-0.1px;">Components</div><svg style="left:1380px;top:283px" width="9" height="12" viewBox="0 0 9 12" ><path d="M1.6 1.6 L6.3 6 L1.6 10.4 Z" fill="none" stroke="#1e1e1e" stroke-width="1.1" stroke-linejoin="round"/></svg><svg style="left:1402px;top:281px" width="17" height="17" viewBox="0 0 17 17" ><path d="M1.5 13.3 V4.6 C1.5 3.9 2 3.4 2.7 3.4 H5.2 C6 3.4 6.4 3.8 6.6 4.6 L6.8 5.4 H13.2 C14 5.4 14.5 5.9 14.5 6.7 V13.3 C14.5 14.1 14 14.6 13.2 14.6 H2.8 C2 14.6 1.5 14.1 1.5 13.3 Z M1.5 7.3 H5.2 C6.2 7.3 6.7 6.6 6.8 5.4" fill="none" stroke="#bd8716" stroke-width="1.15" stroke-linejoin="round"/></svg><div class="se" style="left:1423.5px;top:283px;letter-spacing:-0.1px;">Layout</div><svg style="left:1379px;top:303.5px" width="9" height="10" viewBox="0 0 9 10" ><path d="M7.8 1.8 V8.2 H1.2 Z" fill="#1e1e1e"/></svg><svg style="left:1402px;top:300px" width="17" height="17" viewBox="0 0 17 17" ><path d="M1.5 13.3 V4.6 C1.5 3.9 2 3.4 2.7 3.4 H5.2 C6 3.4 6.4 3.8 6.6 4.6 L6.8 5.4 H13.2 C14 5.4 14.5 5.9 14.5 6.7 V13.3 C14.5 14.1 14 14.6 13.2 14.6 H2.8 C2 14.6 1.5 14.1 1.5 13.3 Z M1.5 7.3 H5.2 C6.2 7.3 6.7 6.6 6.8 5.4" fill="none" stroke="#bd8716" stroke-width="1.15" stroke-linejoin="round"/></svg><div class="se" style="left:1423.5px;top:302px;letter-spacing:-0.1px;">Pages</div><svg style="left:1420px;top:319px" width="17" height="17" viewBox="0 0 17 17" ><path d="M4.9 6.4 V4 C4.9 3.1 5.4 2.6 6.3 2.6 H9.9 L13.4 6.1 V14 C13.4 14.9 12.9 15.4 12 15.4 H8.6" fill="none" stroke="#1e1e1e" stroke-width="1.05" stroke-linejoin="round"/><path d="M9.7 2.8 V4.8 C9.7 5.5 10.2 6 10.9 6 H13.2" fill="none" stroke="#1e1e1e" stroke-width="1"/><path d="M8.7 12.4 A3.8 3.8 0 1 0 7.2 15" fill="none" stroke="#1d9b1d" stroke-width="1.05"/><circle cx="4.9" cy="11.9" r="1.45" fill="none" stroke="#1d9b1d" stroke-width="1.05"/><path d="M6.4 10.3 V12.5 C6.4 13.3 7.9 13.5 8.7 12.4" fill="none" stroke="#1d9b1d" stroke-width="1.05"/></svg><div class="se" style="left:1441.5px;top:321px;letter-spacing:-0.1px;">Counter.razor</div><svg style="left:1420px;top:338px" width="17" height="17" viewBox="0 0 17 17" ><path d="M4.9 6.4 V4 C4.9 3.1 5.4 2.6 6.3 2.6 H9.9 L13.4 6.1 V14 C13.4 14.9 12.9 15.4 12 15.4 H8.6" fill="none" stroke="#1e1e1e" stroke-width="1.05" stroke-linejoin="round"/><path d="M9.7 2.8 V4.8 C9.7 5.5 10.2 6 10.9 6 H13.2" fill="none" stroke="#1e1e1e" stroke-width="1"/><path d="M8.7 12.4 A3.8 3.8 0 1 0 7.2 15" fill="none" stroke="#1d9b1d" stroke-width="1.05"/><circle cx="4.9" cy="11.9" r="1.45" fill="none" stroke="#1d9b1d" stroke-width="1.05"/><path d="M6.4 10.3 V12.5 C6.4 13.3 7.9 13.5 8.7 12.4" fill="none" stroke="#1d9b1d" stroke-width="1.05"/></svg><div class="se" style="left:1441.5px;top:340px;letter-spacing:-0.1px;">Error.razor</div><svg style="left:1420px;top:357px" width="17" height="17" viewBox="0 0 17 17" ><path d="M4.9 6.4 V4 C4.9 3.1 5.4 2.6 6.3 2.6 H9.9 L13.4 6.1 V14 C13.4 14.9 12.9 15.4 12 15.4 H8.6" fill="none" stroke="#1e1e1e" stroke-width="1.05" stroke-linejoin="round"/><path d="M9.7 2.8 V4.8 C9.7 5.5 10.2 6 10.9 6 H13.2" fill="none" stroke="#1e1e1e" stroke-width="1"/><path d="M8.7 12.4 A3.8 3.8 0 1 0 7.2 15" fill="none" stroke="#1d9b1d" stroke-width="1.05"/><circle cx="4.9" cy="11.9" r="1.45" fill="none" stroke="#1d9b1d" stroke-width="1.05"/><path d="M6.4 10.3 V12.5 C6.4 13.3 7.9 13.5 8.7 12.4" fill="none" stroke="#1d9b1d" stroke-width="1.05"/></svg><div class="se" style="left:1441.5px;top:359px;letter-spacing:-0.1px;">Home.razor</div><svg style="left:1420px;top:376px" width="17" height="17" viewBox="0 0 17 17" ><path d="M4.9 6.4 V4 C4.9 3.1 5.4 2.6 6.3 2.6 H9.9 L13.4 6.1 V14 C13.4 14.9 12.9 15.4 12 15.4 H8.6" fill="none" stroke="#1e1e1e" stroke-width="1.05" stroke-linejoin="round"/><path d="M9.7 2.8 V4.8 C9.7 5.5 10.2 6 10.9 6 H13.2" fill="none" stroke="#1e1e1e" stroke-width="1"/><path d="M8.7 12.4 A3.8 3.8 0 1 0 7.2 15" fill="none" stroke="#1d9b1d" stroke-width="1.05"/><circle cx="4.9" cy="11.9" r="1.45" fill="none" stroke="#1d9b1d" stroke-width="1.05"/><path d="M6.4 10.3 V12.5 C6.4 13.3 7.9 13.5 8.7 12.4" fill="none" stroke="#1d9b1d" stroke-width="1.05"/></svg><div class="se" style="left:1441.5px;top:378px;letter-spacing:-0.1px;">NotFound.razor</div><svg style="left:1420px;top:395px" width="17" height="17" viewBox="0 0 17 17" ><path d="M4.9 6.4 V4 C4.9 3.1 5.4 2.6 6.3 2.6 H9.9 L13.4 6.1 V14 C13.4 14.9 12.9 15.4 12 15.4 H8.6" fill="none" stroke="#1e1e1e" stroke-width="1.05" stroke-linejoin="round"/><path d="M9.7 2.8 V4.8 C9.7 5.5 10.2 6 10.9 6 H13.2" fill="none" stroke="#1e1e1e" stroke-width="1"/><path d="M8.7 12.4 A3.8 3.8 0 1 0 7.2 15" fill="none" stroke="#1d9b1d" stroke-width="1.05"/><circle cx="4.9" cy="11.9" r="1.45" fill="none" stroke="#1d9b1d" stroke-width="1.05"/><path d="M6.4 10.3 V12.5 C6.4 13.3 7.9 13.5 8.7 12.4" fill="none" stroke="#1d9b1d" stroke-width="1.05"/></svg><div class="se" style="left:1441.5px;top:397px;letter-spacing:-0.1px;">Weather.razor</div><svg style="left:1402px;top:414px" width="17" height="17" viewBox="0 0 17 17" ><path d="M4.9 6.4 V4 C4.9 3.1 5.4 2.6 6.3 2.6 H9.9 L13.4 6.1 V14 C13.4 14.9 12.9 15.4 12 15.4 H8.6" fill="none" stroke="#1e1e1e" stroke-width="1.05" stroke-linejoin="round"/><path d="M9.7 2.8 V4.8 C9.7 5.5 10.2 6 10.9 6 H13.2" fill="none" stroke="#1e1e1e" stroke-width="1"/><path d="M8.7 12.4 A3.8 3.8 0 1 0 7.2 15" fill="none" stroke="#1d9b1d" stroke-width="1.05"/><circle cx="4.9" cy="11.9" r="1.45" fill="none" stroke="#1d9b1d" stroke-width="1.05"/><path d="M6.4 10.3 V12.5 C6.4 13.3 7.9 13.5 8.7 12.4" fill="none" stroke="#1d9b1d" stroke-width="1.05"/></svg><div class="se" style="left:1423.5px;top:416px;letter-spacing:-0.1px;">_Imports.razor</div><svg style="left:1402px;top:433px" width="17" height="17" viewBox="0 0 17 17" ><path d="M4.9 6.4 V4 C4.9 3.1 5.4 2.6 6.3 2.6 H9.9 L13.4 6.1 V14 C13.4 14.9 12.9 15.4 12 15.4 H8.6" fill="none" stroke="#1e1e1e" stroke-width="1.05" stroke-linejoin="round"/><path d="M9.7 2.8 V4.8 C9.7 5.5 10.2 6 10.9 6 H13.2" fill="none" stroke="#1e1e1e" stroke-width="1"/><path d="M8.7 12.4 A3.8 3.8 0 1 0 7.2 15" fill="none" stroke="#1d9b1d" stroke-width="1.05"/><circle cx="4.9" cy="11.9" r="1.45" fill="none" stroke="#1d9b1d" stroke-width="1.05"/><path d="M6.4 10.3 V12.5 C6.4 13.3 7.9 13.5 8.7 12.4" fill="none" stroke="#1d9b1d" stroke-width="1.05"/></svg><div class="se" style="left:1423.5px;top:435px;letter-spacing:-0.1px;">App.razor</div><svg style="left:1402px;top:452px" width="17" height="17" viewBox="0 0 17 17" ><path d="M4.9 6.4 V4 C4.9 3.1 5.4 2.6 6.3 2.6 H9.9 L13.4 6.1 V14 C13.4 14.9 12.9 15.4 12 15.4 H8.6" fill="none" stroke="#1e1e1e" stroke-width="1.05" stroke-linejoin="round"/><path d="M9.7 2.8 V4.8 C9.7 5.5 10.2 6 10.9 6 H13.2" fill="none" stroke="#1e1e1e" stroke-width="1"/><path d="M8.7 12.4 A3.8 3.8 0 1 0 7.2 15" fill="none" stroke="#1d9b1d" stroke-width="1.05"/><circle cx="4.9" cy="11.9" r="1.45" fill="none" stroke="#1d9b1d" stroke-width="1.05"/><path d="M6.4 10.3 V12.5 C6.4 13.3 7.9 13.5 8.7 12.4" fill="none" stroke="#1d9b1d" stroke-width="1.05"/></svg><div class="se" style="left:1423.5px;top:454px;letter-spacing:-0.1px;">Routes.razor</div><svg style="left:1362px;top:473px" width="9" height="12" viewBox="0 0 9 12" ><path d="M1.6 1.6 L6.3 6 L1.6 10.4 Z" fill="none" stroke="#1e1e1e" stroke-width="1.1" stroke-linejoin="round"/></svg><svg style="left:1384px;top:471px" width="17" height="17" viewBox="0 0 17 17" ><path d="M4.5 6.2 V3.8 C4.5 3 5 2.5 5.8 2.5 H9.9 L13.4 6 V14 C13.4 14.9 12.9 15.4 12 15.4 H9.8" fill="none" stroke="#1e1e1e" stroke-width="1.05" stroke-linejoin="round"/><path d="M9.7 2.7 V4.6 C9.7 5.3 10.2 5.8 10.9 5.8 H13.2" fill="none" stroke="#1e1e1e" stroke-width="1"/><path d="M3.8 9.2 C2.8 9.2 2.6 9.7 2.6 10.6 V11.4 C2.6 12 2.3 12.4 1.4 12.4 C2.3 12.4 2.6 12.8 2.6 13.4 V14.2 C2.6 15.1 2.8 15.6 3.8 15.6 M6.6 9.2 C7.6 9.2 7.8 9.7 7.8 10.6 V11.4 C7.8 12 8.1 12.4 9 12.4 C8.1 12.4 7.8 12.8 7.8 13.4 V14.2 C7.8 15.1 7.6 15.6 6.6 15.6" fill="none" stroke="#1e1e1e" stroke-width="1.1"/></svg><div class="se" style="left:1405.5px;top:473px;letter-spacing:-0.1px;">appsettings.json</div><svg style="left:1362px;top:492px" width="9" height="12" viewBox="0 0 9 12" ><path d="M1.6 1.6 L6.3 6 L1.6 10.4 Z" fill="none" stroke="#1e1e1e" stroke-width="1.1" stroke-linejoin="round"/></svg><svg style="left:1384px;top:490px" width="17" height="17" viewBox="0 0 17 17" ><path d="M5.5 6.4 C5.2 5.6 4.6 5.2 3.7 5.2 C2.2 5.2 1.6 6.5 1.6 8.9 C1.6 11.3 2.2 12.5 3.7 12.5 C4.6 12.5 5.2 12.1 5.5 11.3" fill="none" stroke="#139113" stroke-width="1.15"/><path d="M9.5 5.2 V12.6 M12.5 5.2 V12.6 M7.3 7.6 H14.9 M7.3 10.4 H14.9" stroke="#139113" stroke-width="1.1"/></svg><div class="se" style="left:1405.5px;top:492px;letter-spacing:-0.1px;">Program.cs</div>

<div class="abs" style="left:1689px;top:64px;letter-spacing:-0.2px;font-size:12px;line-height:14px;white-space:nowrap;transform-origin:0 0;transform:translate(14px,0) rotate(90deg)">Diagnostic Tools</div>

<div id="status"></div>
<div class="abs" style="left:5px;top:907px;width:16px;height:12px;border:1px solid #e8e8e8"></div>
<div class="st" style="left:32px">Ready</div>
<svg style="left:1355px;top:907px" width="14" height="12"><path d="M7 12 V2 M3 6 L7 2 L11 6" fill="none" stroke="#f0f0f0" stroke-width="1.1"/></svg>
<div class="st" style="left:1378px">Add to Source Control</div>
<svg style="left:1502px;top:909px" width="12" height="8"><path d="M2 6 L6 2.5 L10 6" fill="none" stroke="#f0f0f0" stroke-width="1.1"/></svg>
<svg style="left:1528px;top:908px" width="16" height="12"><path d="M1.5 1.5 H14.5 V4 H1.5 Z M2.5 4 V12 M13.5 4 V12 M6 7 H10" fill="none" stroke="#f0f0f0" stroke-width="1.1"/></svg>
<div class="st" style="left:1552px">Select Repository</div>
<svg style="left:1648px;top:909px" width="12" height="8"><path d="M2 6 L6 2.5 L10 6" fill="none" stroke="#f0f0f0" stroke-width="1.1"/></svg>
<svg style="left:1675px;top:907px" width="14" height="12"><path d="M3 12 V6 C3 3 5 1.5 7 1.5 C9 1.5 11 3 11 6 V12" fill="none" stroke="#f0f0f0" stroke-width="1.1"/></svg>
</body></html>
